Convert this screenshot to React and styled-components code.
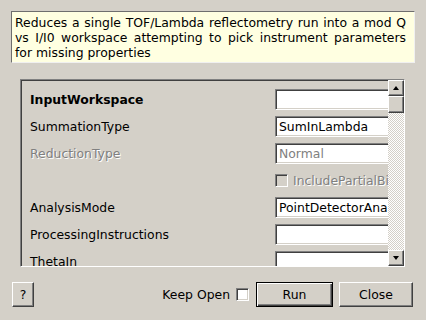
import React from 'react'
import styled, { createGlobalStyle, css } from 'styled-components'

const GlobalStyle = createGlobalStyle`
    html, body {
        margin: 0;
        padding: 0;
        background: #d4d0c8;
    }
    body {
        font-family: "DejaVu Sans", "Liberation Sans", sans-serif;
        font-size: 12.4px;
        color: #000;
    }
`

const sunken = css`
    border: 1px solid;
    border-color: #808080 #ffffff #ffffff #808080;
    box-shadow: inset 1px 1px #404040, inset -1px -1px #d4d0c8;
`

const raised = css`
    border: 1px solid;
    border-color: #ffffff #404040 #404040 #ffffff;
    box-shadow: inset -1px -1px #808080;
`

const Dialog = styled.div`
    width: 426px;
    height: 320px;
    box-sizing: border-box;
    display: flex;
    flex-direction: column;
    overflow: hidden;
`

const Description = styled.div`
    margin: 11px 11px 0 11px;
    padding: 3px 8px 2px 3px;
    background: #ffffe1;
    border: 1px solid;
    border-color: #6e6e6e #f0f0f0 #f0f0f0 #6e6e6e;
    line-height: 15px;
    text-align: justify;
`

const Frame = styled.div`
    margin: 16px 21px 0 20px;
    height: 188px;
    box-sizing: border-box;
    ${sunken}
    display: flex;
`

const Viewport = styled.div`
    flex: 1;
    overflow: hidden;
    padding: 9px 0 0 9px;
    display: grid;
    grid-template-columns: 245px 130px;
    grid-auto-rows: 21px;
    row-gap: 6px;
    align-items: center;
    align-content: start;
`

const Label = styled.div`
    white-space: nowrap;
    font-weight: ${p => (p.bold ? 'bold' : 'normal')};
    color: ${p => (p.disabled ? '#808080' : '#000')};
    text-shadow: ${p => (p.disabled ? '1px 1px #ffffff' : 'none')};
`

const Field = styled.div`
    height: 21px;
    box-sizing: border-box;
    ${sunken}
    background: #ffffff;
    padding: 0 3px;
    display: flex;
    align-items: center;
    white-space: nowrap;
    overflow: hidden;
    color: ${p => (p.disabled ? '#808080' : '#000')};
`

const CheckRow = styled.div`
    grid-column: 2;
    display: flex;
    align-items: center;
    gap: 5px;
    white-space: nowrap;
`

const Box = styled.div`
    width: 13px;
    height: 13px;
    box-sizing: border-box;
    flex: none;
    ${sunken}
    background: ${p => (p.disabled ? '#d4d0c8' : '#ffffff')};
`

const Scrollbar = styled.div`
    width: 16px;
    display: flex;
    flex-direction: column;
    background: repeating-conic-gradient(#ffffff 0 25%, #d4d0c8 0 50%) 0 0 / 2px 2px;
`

const ArrowButton = styled.div`
    height: 16px;
    box-sizing: border-box;
    background: #d4d0c8;
    ${raised}
    display: flex;
    align-items: center;
    justify-content: center;
    margin-top: ${p => (p.down ? 'auto' : '0')};

    &::after {
        content: '';
        width: 0;
        height: 0;
        border-left: 3.5px solid transparent;
        border-right: 3.5px solid transparent;
        ${p => (p.down ? 'border-top: 4px solid #000;' : 'border-bottom: 4px solid #000;')}
    }
`

const Handle = styled.div`
    height: 17px;
    box-sizing: border-box;
    background: #d4d0c8;
    ${raised}
`

const BottomBar = styled.div`
    margin-top: 15px;
    padding: 0 13px 0 12px;
    display: flex;
    align-items: center;
`

const Button = styled.div`
    height: 25px;
    width: ${p => p.width}px;
    margin-left: ${p => p.gap || 0}px;
    box-sizing: border-box;
    background: #d4d0c8;
    display: flex;
    align-items: center;
    justify-content: center;
    ${p =>
        p.primary
            ? css`
                  border: 1px solid #000;
                  box-shadow: inset 1px 1px #ffffff, inset -1px -1px #404040, inset -2px -2px #808080;
              `
            : raised}
`

const Spacer = styled.div`
    flex: 1;
`

const KeepOpen = styled.div`
    display: flex;
    align-items: center;
    gap: 6px;
    margin-right: 7px;
`

const rows = [
    { title: 'InputWorkspace', value: '', bold: true },
    { title: 'SummationType', value: 'SumInLambda' },
    { title: 'ReductionType', value: 'Normal', disabled: true },
    { check: 'IncludePartialBins' },
    { title: 'AnalysisMode', value: 'PointDetectorAnalysis' },
    { title: 'ProcessingInstructions', value: '' },
    { title: 'ThetaIn', value: '' },
    { title: 'ThetaLogName', value: '' },
]

const App = () => {
    return (
        <>
            <GlobalStyle />
            <Dialog>
                <Description>
                    Reduces a single TOF/Lambda reflectometry run into a mod Q vs I/I0 workspace attempting to pick instrument parameters for missing properties
                </Description>
                <Frame>
                    <Viewport>
                        {rows.map((row, i) =>
                            row.check ? (
                                <CheckRow key={i}>
                                    <Box disabled />
                                    <Label disabled>{row.check}</Label>
                                </CheckRow>
                            ) : (
                                <React.Fragment key={i}>
                                    <Label bold={row.bold} disabled={row.disabled}>{row.title}</Label>
                                    <Field disabled={row.disabled}>{row.value}</Field>
                                </React.Fragment>
                            )
                        )}
                    </Viewport>
                    <Scrollbar>
                        <ArrowButton />
                        <Handle />
                        <ArrowButton down />
                    </Scrollbar>
                </Frame>
                <BottomBar>
                    <Button width={22}>?</Button>
                    <Spacer />
                    <KeepOpen>
                        Keep Open
                        <Box />
                    </KeepOpen>
                    <Button width={77} primary>Run</Button>
                    <Button width={74} gap={6}>Close</Button>
                </BottomBar>
            </Dialog>
        </>
    )
}

export default App
